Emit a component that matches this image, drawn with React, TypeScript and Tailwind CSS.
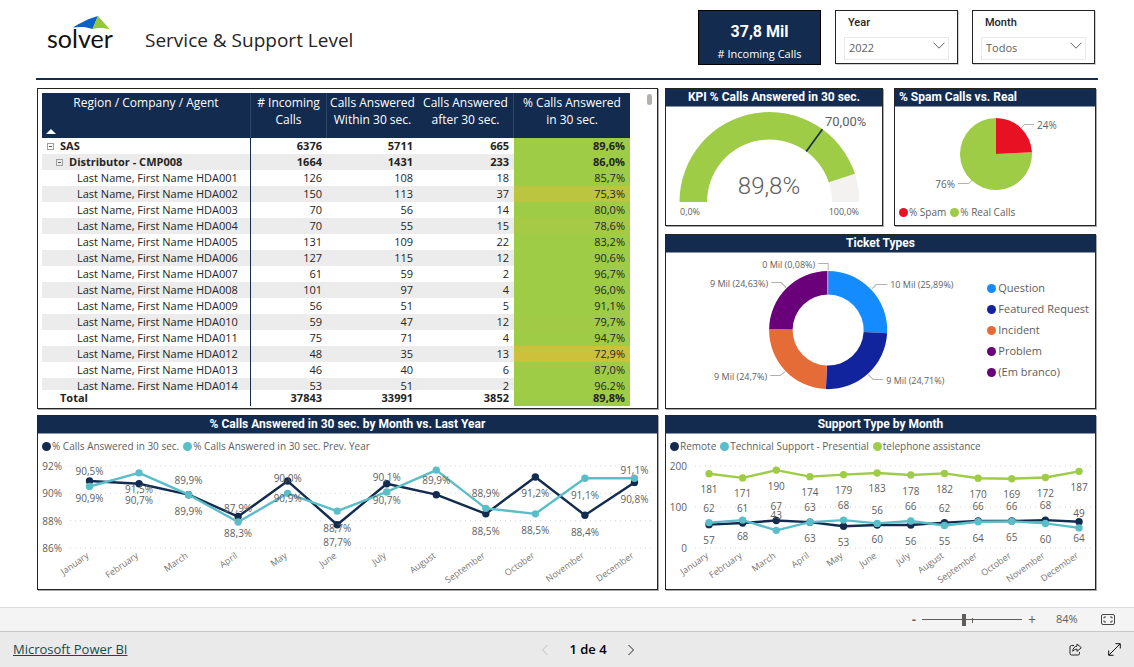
import type { ReactNode } from 'react';
import { useState } from 'react';

const months = [
  'January',
  'February',
  'March',
  'April',
  'May',
  'June',
  'July',
  'August',
  'September',
  'October',
  'November',
  'December',
];

const rows = [
  { name: 'HDA001', incoming: 126, within: 108, after: 18, pct: '85,7%', tone: 'bg-[#9fcc47]' },
  { name: 'HDA002', incoming: 150, within: 113, after: 37, pct: '75,3%', tone: 'bg-[#bcc53f]' },
  { name: 'HDA003', incoming: 70, within: 56, after: 14, pct: '80,0%', tone: 'bg-[#9fcc47]' },
  { name: 'HDA004', incoming: 70, within: 55, after: 15, pct: '78,6%', tone: 'bg-[#a6ca45]' },
  { name: 'HDA005', incoming: 131, within: 109, after: 22, pct: '83,2%', tone: 'bg-[#9fcc47]' },
  { name: 'HDA006', incoming: 127, within: 115, after: 12, pct: '90,6%', tone: 'bg-[#9fcc47]' },
  { name: 'HDA007', incoming: 61, within: 59, after: 2, pct: '96,7%', tone: 'bg-[#9fcc47]' },
  { name: 'HDA008', incoming: 101, within: 97, after: 4, pct: '96,0%', tone: 'bg-[#9fcc47]' },
  { name: 'HDA009', incoming: 56, within: 51, after: 5, pct: '91,1%', tone: 'bg-[#9fcc47]' },
  { name: 'HDA010', incoming: 59, within: 47, after: 12, pct: '79,7%', tone: 'bg-[#a1cb46]' },
  { name: 'HDA011', incoming: 75, within: 71, after: 4, pct: '94,7%', tone: 'bg-[#9fcc47]' },
  { name: 'HDA012', incoming: 48, within: 35, after: 13, pct: '72,9%', tone: 'bg-[#cdc13b]' },
  { name: 'HDA013', incoming: 46, within: 40, after: 6, pct: '87,0%', tone: 'bg-[#9fcc47]' },
  { name: 'HDA014', incoming: 53, within: 51, after: 2, pct: '96,2%', tone: 'bg-[#9fcc47]' },
];

const answered = [90.9, 90.7, 89.9, 88.3, 90.9, 87.7, 90.7, 89.9, 88.5, 91.2, 88.4, 90.8];
const answeredPrev = [90.5, 91.5, 89.9, 87.9, 90, 88.7, 90.1, 91.7, 88.9, 88.5, 91.1, 91.1];

// [month index, text, baseline]
type PointLabel = [number, string, number];

const answeredLabels: PointLabel[] = [
  [0, '90,5%', 16],
  [0, '90,9%', 43],
  [1, '91,5%', 34],
  [1, '90,7%', 45],
  [2, '89,9%', 25],
  [2, '89,9%', 56],
  [3, '87,9%', 53],
  [3, '88,3%', 78],
  [4, '90,0%', 23],
  [4, '90,9%', 43],
  [5, '88,7%', 73],
  [5, '87,7%', 87],
  [6, '90,1%', 22],
  [6, '90,7%', 45],
  [7, '89,9%', 25],
  [8, '88,9%', 38],
  [8, '88,5%', 76],
  [9, '91,2%', 38],
  [9, '88,5%', 75],
  [10, '91,1%', 40],
  [10, '88,4%', 77],
  [11, '91,1%', 15],
  [11, '90,8%', 44],
];

const remote = [57, 61, 67, 63, 53, 56, 56, 62, 66, 66, 68, 64];
const technical = [62, 68, 43, 63, 68, 60, 66, 55, 64, 65, 60, 49];
const telephone = [181, 171, 190, 174, 179, 183, 178, 182, 170, 169, 172, 187];

const supportLabels: PointLabel[] = [
  [0, '181', 34],
  [1, '171', 38],
  [2, '190', 31],
  [3, '174', 37],
  [4, '179', 35],
  [5, '183', 33],
  [6, '178', 36],
  [7, '182', 34],
  [8, '170', 39],
  [9, '169', 39],
  [10, '172', 38],
  [11, '187', 32],
  [0, '62', 53],
  [1, '61', 53],
  [2, '67', 51],
  [2, '43', 60],
  [3, '63', 52],
  [4, '68', 50],
  [5, '56', 55],
  [6, '66', 51],
  [7, '62', 53],
  [8, '66', 51],
  [9, '66', 51],
  [10, '68', 50],
  [11, '49', 58],
  [0, '57', 85],
  [1, '68', 81],
  [3, '63', 83],
  [4, '53', 87],
  [5, '60', 84],
  [6, '56', 86],
  [7, '55', 86],
  [8, '64', 83],
  [9, '65', 82],
  [10, '60', 84],
  [11, '64', 83],
];

const tickets = [
  { label: 'Question', share: 25.89, color: '#148cff' },
  { label: 'Featured Request', share: 24.71, color: '#12239e' },
  { label: 'Incident', share: 24.7, color: '#e66c37' },
  { label: 'Problem', share: 24.62, color: '#6b007b' },
  { label: '(Em branco)', share: 0.08, color: '#6b007b' },
];

const polar = (cx: number, cy: number, r: number, turn: number) => {
  const a = turn * Math.PI * 2;
  return `${(cx + r * Math.sin(a)).toFixed(2)} ${(cy - r * Math.cos(a)).toFixed(2)}`;
};

// ring segment, turns run clockwise from 12 o'clock
const arc = (cx: number, cy: number, outer: number, inner: number, from: number, to: number) => {
  const large = to - from > 0.5 ? 1 : 0;
  return (
    `M${polar(cx, cy, outer, from)} A${outer} ${outer} 0 ${large} 1 ${polar(cx, cy, outer, to)} ` +
    `L${polar(cx, cy, inner, to)} A${inner} ${inner} 0 ${large} 0 ${polar(cx, cy, inner, from)} Z`
  );
};

const Panel = ({
  title,
  left,
  children,
}: {
  title: string;
  left?: boolean;
  children: ReactNode;
}) => (
  <section className="min-w-0 border border-[#252423] bg-white shadow-[1px_1px_0_#a9a9a9]">
    <h2
      className={`h-[18px] border-b border-[#8995a7] bg-[#122b4f] px-1 font-[Roboto,sans-serif] text-xs leading-4 font-bold text-white ${
        left ? 'text-left' : 'text-center'
      }`}
    >
      {title}
    </h2>
    {children}
  </section>
);

const Legend = ({ items }: { items: { label: string; dot: string }[] }) => (
  <ul className="flex items-center gap-1 px-1 text-[10px] whitespace-nowrap text-[#605e5c]">
    {items.map(({ label, dot }) => (
      <li key={label} className="flex items-center gap-px">
        <span className={`size-[9px] rounded-full ${dot}`} />
        {label}
      </li>
    ))}
  </ul>
);

type LineChartProps = {
  name: string;
  width: number;
  x0: number;
  step: number;
  min: number;
  max: number;
  axis: { value: number; text: string }[];
  axisX: number;
  gridX: number;
  series: { color: string; values: number[] }[];
  labels: PointLabel[];
};

const LineChart = ({
  name,
  width,
  x0,
  step,
  min,
  max,
  axis,
  axisX,
  gridX,
  series,
  labels,
}: LineChartProps) => {
  const x = (i: number) => x0 + i * step;
  const y = (v: number) => 89 - ((v - min) / (max - min)) * 82;

  return (
    <svg
      viewBox={`0 0 ${width} 130`}
      className="block w-full text-[10px]"
      role="img"
      aria-label={name}
    >
      {axis.map(({ value, text }) => (
        <g key={value}>
          <line
            x1={gridX}
            x2={width - 4}
            y1={y(value)}
            y2={y(value)}
            stroke="#d6d4d2"
            strokeDasharray="1 4"
          />
          <text x={axisX} y={y(value) + 4} textAnchor="end" fill="#605e5c">
            {text}
          </text>
        </g>
      ))}
      {series.map(({ color, values }) => (
        <g key={color} fill={color}>
          <polyline
            points={values.map((v, i) => `${x(i)},${y(v)}`).join(' ')}
            fill="none"
            stroke={color}
            strokeWidth="2.4"
            strokeLinejoin="round"
          />
          {values.map((v, i) => (
            <circle key={i} cx={x(i)} cy={y(v)} r="3.7" />
          ))}
        </g>
      ))}
      {labels.map(([i, text, baseline]) => (
        <text key={`${i}-${baseline}`} x={x(i)} y={baseline} textAnchor="middle" fill="#605e5c">
          {text}
        </text>
      ))}
      {months.map((month, i) => (
        <text
          key={month}
          transform={`translate(${x(i)} 98) rotate(-35)`}
          textAnchor="end"
          className="text-[9px]"
          fill="#777573"
        >
          {month}
        </text>
      ))}
    </svg>
  );
};

const Slicer = ({ label, options }: { label: string; options: string[] }) => (
  <div className="flex h-[54px] w-[123px] flex-col border border-[#252423] px-2 pt-1 shadow-[1px_1px_0_#d0d0d0]">
    <label htmlFor={label} className="px-1 font-[Roboto,sans-serif] text-[11px] leading-4 font-medium">
      {label}
    </label>
    <div className="relative mt-[3px]">
      <select
        id={label}
        className="h-[23px] w-full appearance-none border border-[#eaeaea] bg-white px-1 text-[11px] text-[#605e5c]"
      >
        {options.map((option) => (
          <option key={option}>{option}</option>
        ))}
      </select>
      <svg
        viewBox="0 0 12 7"
        className="pointer-events-none absolute top-2 right-1 h-[7px] w-3"
        fill="none"
        stroke="#605e5c"
      >
        <path d="M.5.7 6 6.2 11.5.7" />
      </svg>
    </div>
  </div>
);

const Toggle = () => (
  <button aria-label="Collapse" className="flex size-[7px] border border-[#a19f9d]">
    <span className="m-auto h-px w-[3px] bg-[#605e5c]" />
  </button>
);

const CallsTable = () => (
  <section className="flex h-[321px] border border-[#252423] bg-white pt-1 pl-1 shadow-[1px_1px_0_#a9a9a9]">
    <div className="h-[313px] min-w-0 flex-1 overflow-hidden">
      <table className="w-full table-fixed border-separate border-spacing-0 text-[11px] leading-4">
        <colgroup>
          <col className="w-[209px]" />
          <col className="w-[76px]" />
          <col className="w-[91px]" />
          <col className="w-[96px]" />
          <col />
        </colgroup>
        <thead className="sticky top-0 bg-[#122b4f] text-xs text-white">
          <tr className="h-[45px] align-top whitespace-nowrap [&>th]:border-[#2f4566] [&>th]:pt-px [&>th]:leading-[17px] [&>th]:font-normal">
            <th className="relative border-r">
              Region / Company / Agent
              <span className="absolute bottom-1 left-1 border-x-[5px] border-b-[5px] border-x-transparent border-b-white" />
            </th>
            <th className="border-r">
              # Incoming
              <br />
              Calls
            </th>
            <th>
              Calls Answered
              <br />
              Within 30 sec.
            </th>
            <th className="border-r">
              Calls Answered
              <br />
              after 30 sec.
            </th>
            <th>
              % Calls Answered
              <br />
              in 30 sec.
            </th>
          </tr>
        </thead>
        <tbody className="text-right text-[#252423] [&>tr]:h-4 [&>tr:nth-child(even)]:bg-[#ececec] [&_td]:pr-[5px]">
          <tr className="font-bold">
            <th className="border-r border-[#122b4f] pl-[5px] text-left">
              <div className="flex items-center gap-1.5">
                <Toggle />
                SAS
              </div>
            </th>
            <td>6376</td>
            <td>5711</td>
            <td>665</td>
            <td className="bg-[#9fcc47]">89,6%</td>
          </tr>
          <tr className="font-bold">
            <th className="border-r border-[#122b4f] pl-[14px] text-left">
              <div className="flex items-center gap-1.5">
                <Toggle />
                Distributor - CMP008
              </div>
            </th>
            <td>1664</td>
            <td>1431</td>
            <td>233</td>
            <td className="bg-[#9fcc47]">86,0%</td>
          </tr>
          {rows.map(({ name, incoming, within, after, pct, tone }) => (
            <tr key={name}>
              <th className="border-r border-[#122b4f] pl-[35px] text-left font-normal">
                Last Name, First Name {name}
              </th>
              <td>{incoming}</td>
              <td>{within}</td>
              <td>{after}</td>
              <td className={tone}>{pct}</td>
            </tr>
          ))}
        </tbody>
        <tfoot className="sticky bottom-0 bg-white text-right text-[#252423]">
          <tr className="h-4 font-bold [&_td]:pr-[5px]">
            <th className="border-r border-[#122b4f] pl-[18px] text-left">Total</th>
            <td>37843</td>
            <td>33991</td>
            <td>3852</td>
            <td className="bg-[#9fcc47]">89,8%</td>
          </tr>
        </tfoot>
      </table>
    </div>
    <div className="flex w-[27px] justify-end pt-px pr-[5px]">
      <span className="h-[11px] w-[5px] rounded-full bg-[#b3b0ad]" />
    </div>
  </section>
);

const Gauge = () => (
  <svg
    viewBox="0 0 216 118"
    className="block w-full text-[10px]"
    fill="#605e5c"
    role="img"
    aria-label="KPI gauge"
  >
    <path d={arc(103.5, 95, 90, 62.5, -0.25, 0.25)} fill="#f3f2f1" />
    <path d={arc(103.5, 95, 90, 62.5, -0.25, 0.199)} fill="#9fcc47" />
    <path
      d={`M${polar(103.5, 95, 62.5, 0.1)} L${polar(103.5, 95, 90, 0.1)}`}
      stroke="#122b4f"
      strokeWidth="1.6"
    />
    <text x="159" y="19" className="font-[Roboto,sans-serif] text-[13px]">
      70,00%
    </text>
    <text
      x="103"
      y="87"
      textAnchor="middle"
      className="font-[Roboto,sans-serif] text-[24px] font-light"
    >
      89,8%
    </text>
    <text x="14" y="108" className="text-[9px]">
      0,0%
    </text>
    <text x="193" y="108" textAnchor="end" className="text-[9px]">
      100,0%
    </text>
  </svg>
);

const SpamPie = () => (
  <svg
    viewBox="0 0 200 96"
    className="block w-full text-[10px]"
    fill="#605e5c"
    role="img"
    aria-label="Spam calls vs. real calls"
  >
    <path d={arc(101, 47, 36, 0, 0.242, 1)} fill="#9fcc47" />
    <path d={arc(101, 47, 36, 0, 0, 0.242)} fill="#e81123" />
    <g fill="none" stroke="#b3b0ad">
      <path d="M126 21l4-3.500h9" />
      <path d="M63 76.500h11l3-3.500" />
    </g>
    <text x="142" y="22">
      24%
    </text>
    <text x="60" y="81" textAnchor="end">
      76%
    </text>
  </svg>
);

const TicketDonut = () => {
  let turn = 0;
  return (
    <svg
      viewBox="0 0 300 155"
      className="block w-[70%] text-[9px]"
      fill="#605e5c"
      role="img"
      aria-label="Ticket types"
    >
      {tickets.map(({ label, share, color }) => {
        const from = turn;
        turn += share / 100;
        return <path key={label} d={arc(162, 77, 59, 35.5, from, turn)} fill={color} />;
      })}
      <path d="M161.500 18v23.500" stroke="#c9a5d6" />
      <g fill="none" stroke="#b3b0ad">
        <path d="M152 10.500h10v7" />
        <path d="M105 29.500h10l5 5" />
        <path d="M221 31.500h-11l-4 4" />
        <path d="M104 122.500h10l5-4" />
        <path d="M217 126.500h-10l-5-5" />
      </g>
      <text x="149" y="15" textAnchor="end">
        0 Mil (0,08%)
      </text>
      <text x="102" y="34" textAnchor="end">
        9 Mil (24,63%)
      </text>
      <text x="224" y="35">
        10 Mil (25,89%)
      </text>
      <text x="101" y="127" textAnchor="end">
        9 Mil (24,7%)
      </text>
      <text x="220" y="131">
        9 Mil (24,71%)
      </text>
    </svg>
  );
};

const Logo = () => (
  <svg viewBox="0 0 68 70" className="h-[70px] w-[68px]" role="img" aria-label="solver">
    <path d="M26 23.500C33 19 43 14 51 12L45.500 25C39 22.500 33 22.500 26 23.500Z" fill="#0a62c9" />
    <path d="M51 12 63 25.500C57 23.500 51 23.500 45.500 25Z" fill="#93c83e" />
    <text x="0" y="44" className="font-[Lato,sans-serif] text-[25px]" fill="#111">
      solver
    </text>
  </svg>
);

const StatusBar = () => {
  const [zoom, setZoom] = useState(42);

  return (
    <div className="flex h-6 items-center justify-end border-t border-[#dcdcdc] bg-[#f4f4f4] pr-[19px] text-xs text-[#605e5c]">
      <button aria-label="Zoom out" className="w-4 text-center font-bold">
        -
      </button>
      <div className="relative flex w-[100px] items-center">
        <input
          type="range"
          aria-label="Zoom"
          value={zoom}
          onChange={(e) => setZoom(Number(e.target.value))}
          className="h-3 w-full appearance-none bg-[linear-gradient(#605e5c,#605e5c)] bg-[length:100%_1px] bg-center bg-no-repeat [&::-webkit-slider-thumb]:h-3 [&::-webkit-slider-thumb]:w-1 [&::-webkit-slider-thumb]:appearance-none [&::-webkit-slider-thumb]:bg-[#605e5c]"
        />
        <span className="absolute top-1 left-1/2 h-[5px] w-px bg-[#605e5c]" />
      </div>
      <button aria-label="Zoom in" className="w-5 text-center text-sm">
        +
      </button>
      <span className="ml-3.5 w-9 text-[11px]">84%</span>
      <button aria-label="Fit to page" className="ml-[9px]">
        <svg viewBox="0 0 14 11" className="h-[11px] w-3.5" fill="none" stroke="#484644">
          <rect x=".5" y=".5" width="13" height="10" rx="1.500" />
          <path d="M3 4.500V3h2M9 3h2v1.500M3 6.500V8h2M9 8h2V6.500" />
        </svg>
      </button>
    </div>
  );
};

const Footer = () => (
  <footer className="grid h-9 grid-cols-3 items-center border-t border-[#c8c8c8] bg-[#eaeaea] px-[13px]">
    <a
      href="#powerbi"
      className="justify-self-start text-[13px] font-medium text-[#0b4f4a] underline"
    >
      Microsoft Power BI
    </a>
    <nav className="ml-[42px] flex items-center justify-center gap-5" aria-label="Pages">
      <button aria-label="Previous page" disabled>
        <svg viewBox="0 0 8 12" className="h-3 w-2" fill="none" stroke="#c0c0c0">
          <path d="M6.500 1 1.500 6l5 5" />
        </svg>
      </button>
      <span className="text-[13px] font-semibold text-black">1 de 4</span>
      <button aria-label="Next page">
        <svg viewBox="0 0 8 12" className="h-3 w-2" fill="none" stroke="#252423">
          <path d="M1.500 1l5 5-5 5" />
        </svg>
      </button>
    </nav>
    <div className="flex items-center gap-[26px] justify-self-end">
      <button aria-label="Share">
        <svg viewBox="0 0 13 13" className="size-[13px]" fill="none" stroke="#252423">
          <path d="M5 2.500H2.500A1.500 1.500 0 0 0 1 4v6.500A1.500 1.500 0 0 0 2.500 12H9a1.500 1.500 0 0 0 1.500-1.500V9" />
          <path d="M8 1v2.200C5.500 3.400 4 5 3.700 8.300 5 6.700 6.300 6.200 8 6.200v2.200L12.300 4.700Z" />
        </svg>
      </button>
      <button aria-label="Full screen">
        <svg viewBox="0 0 13 13" className="size-[13px]" fill="none" stroke="#111">
          <path d="M1 12 12 1M7.500.7h4.800v4.800M.7 7.500v4.800h4.800" />
        </svg>
      </button>
    </div>
  </footer>
);

const App = () => (
  <div className="flex min-h-screen flex-col bg-white font-['Open_Sans',sans-serif] text-[#252423]">
    <main className="grow pb-4">
      <header className="mx-9 flex h-20 items-start border-b-2 border-[#122b4f] pr-[3px] pl-[11px]">
        <div className="pt-1">
          <Logo />
        </div>
        <h1 className="pt-[26px] pl-[30px] text-[19px] leading-7">Service &amp; Support Level</h1>
        <div className="ml-auto flex gap-3.5 pt-2.5">
          <div className="flex h-[55px] w-[123px] flex-col items-center border border-black bg-[#122b4f] pt-[11px] text-white">
            <strong className="font-[Roboto,sans-serif] text-base leading-5">37,8 Mil</strong>
            <span className="pt-1 text-[11px] leading-4"># Incoming Calls</span>
          </div>
          <Slicer label="Year" options={['2022', '2021']} />
          <Slicer label="Month" options={['Todos', ...months]} />
        </div>
      </header>

      <div className="mt-2 mr-[38px] ml-[37px] grid grid-cols-[minmax(0,621fr)_minmax(0,431fr)] gap-x-[7px] gap-y-1.5">
        <CallsTable />
        <div className="flex flex-col gap-2">
          <div className="grid grid-cols-[minmax(0,218fr)_minmax(0,202fr)] gap-[11px]">
            <Panel title="KPI % Calls Answered in 30 sec.">
              <Gauge />
            </Panel>
            <Panel title="% Spam Calls vs. Real" left>
              <SpamPie />
              <div className="flex h-[18px] items-center">
                <Legend
                  items={[
                    { label: '% Spam', dot: 'bg-[#e81123]' },
                    { label: '% Real Calls', dot: 'bg-[#9fcc47]' },
                  ]}
                />
              </div>
            </Panel>
          </div>
          <Panel title="Ticket Types">
            <div className="flex">
              <TicketDonut />
              <ul className="flex flex-col gap-[5px] pt-[27px] pl-[21px] text-[11px] leading-4 whitespace-nowrap text-[#605e5c]">
                {tickets.map(({ label, color }) => (
                  <li key={label} className="flex items-center gap-0.5">
                    <span className="size-[9px] rounded-full" style={{ background: color }} />
                    {label}
                  </li>
                ))}
              </ul>
            </div>
          </Panel>
        </div>
        <Panel title="% Calls Answered in 30 sec. by Month vs. Last Year">
          <div className="flex h-[25px] items-center">
            <Legend
              items={[
                { label: '% Calls Answered in 30 sec.', dot: 'bg-[#122b4f]' },
                { label: '% Calls Answered in 30 sec. Prev. Year', dot: 'bg-[#5bbdc8]' },
              ]}
            />
          </div>
          <LineChart
            name="Calls answered in 30 sec. by month"
            width={619}
            x0={51.5}
            step={49.54}
            min={86}
            max={92}
            axis={[
              { value: 92, text: '92%' },
              { value: 90, text: '90%' },
              { value: 88, text: '88%' },
              { value: 86, text: '86%' },
            ]}
            axisX={24}
            gridX={32}
            series={[
              { color: '#122b4f', values: answered },
              { color: '#5bbdc8', values: answeredPrev },
            ]}
            labels={answeredLabels}
          />
        </Panel>
        <Panel title="Support Type by Month">
          <div className="flex h-[25px] items-center">
            <Legend
              items={[
                { label: 'Remote', dot: 'bg-[#122b4f]' },
                { label: 'Technical Support - Presential', dot: 'bg-[#5bbdc8]' },
                { label: 'telephone assistance', dot: 'bg-[#9fcc47]' },
              ]}
            />
          </div>
          <LineChart
            name="Support type by month"
            width={429}
            x0={43}
            step={33.64}
            min={0}
            max={200}
            axis={[
              { value: 200, text: '200' },
              { value: 100, text: '100' },
              { value: 0, text: '0' },
            ]}
            axisX={21}
            gridX={29}
            series={[
              { color: '#122b4f', values: remote },
              { color: '#5bbdc8', values: technical },
              { color: '#9fcc47', values: telephone },
            ]}
            labels={supportLabels}
          />
        </Panel>
      </div>
    </main>
    <StatusBar />
    <Footer />
  </div>
);

export default App;
